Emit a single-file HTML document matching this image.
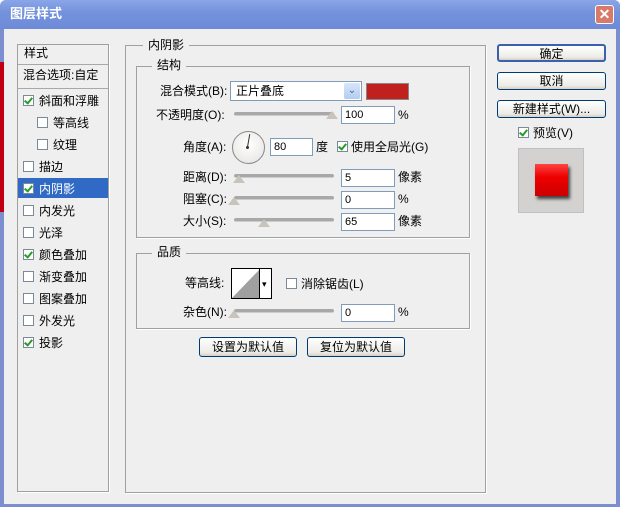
<!DOCTYPE html><html><head><meta charset="utf-8"><style>
*{margin:0;padding:0;box-sizing:border-box}
body{width:620px;height:511px;background:#fff;position:relative;overflow:hidden;font-family:"Liberation Sans","Noto Sans CJK SC","WenQuanYi Zen Hei",sans-serif;font-size:12px;color:#000}
.a{position:absolute}
.t{position:absolute;white-space:nowrap;line-height:14px}
.win{left:0;top:0;width:620px;height:507px;background:#7b8fd0;border-radius:6px 6px 0 0}
.body{left:4px;top:29px;width:612px;height:475px;background:#efefef}
.title{left:0;top:0;width:620px;height:29px;background:linear-gradient(#8aa6e8,#7593dd 40%,#6c8ad6);border-radius:6px 6px 0 0}
.box{position:absolute;border:1px solid #a0a0a0;box-shadow:1px 1px 0 #fff}
.leg{position:absolute;background:#efefef;padding:0 5px;line-height:14px}
.cb{position:absolute;width:11px;height:11px;border:1px solid #7a8a99;background:#fff}
.cb.on::after{content:"";position:absolute;left:2px;top:0px;width:3px;height:6px;border:solid #2a9a2a;border-width:0 2px 2px 0;transform:rotate(40deg)}
.inp{position:absolute;height:18px;background:#fff;border:1px solid #7f9db9;padding-left:3px;line-height:16px;font-size:11px}
.sl{position:absolute;height:4px;background:#a8a8a8;border-radius:2px;border-bottom:1px solid #ccc}
.th{position:absolute;width:0;height:0;border-left:6px solid transparent;border-right:6px solid transparent;border-bottom:8px solid #c8c4bc}
.btn{position:absolute;border:1px solid #003c74;border-radius:3px;background:linear-gradient(#fff,#ecebe6 80%,#d6d0c5);text-align:center;line-height:16px}
</style></head><body>
<div class="a win"></div>
<div class="a title"></div>
<div class="t" style="left:10px;top:7px;color:#fff;font-size:13px;font-weight:bold">图层样式</div>
<div class="a" style="left:595px;top:5px;width:19px;height:19px;background:#d87a6a;border:1px solid #fff;border-radius:3px;color:#fff;text-align:center;line-height:17px;font-weight:bold;font-size:14px">✕</div>
<div class="a body"></div>
<div class="a" style="left:0;top:62px;width:4px;height:150px;background:#c00010"></div>

<div class="box" style="left:17px;top:44px;width:92px;height:448px"></div>
<div class="t" style="left:24px;top:46px">样式</div>
<div class="a" style="left:18px;top:64px;width:90px;height:1px;background:#a8a8a8"></div>
<div class="t" style="left:23px;top:68px">混合选项:自定</div>
<div class="a" style="left:18px;top:88px;width:90px;height:1px;background:#a8a8a8"></div>
<div class="a" style="left:18px;top:178px;width:90px;height:20px;background:#316ac5"></div>
<div class="cb on" style="left:23px;top:95px"></div><div class="t" style="left:39px;top:94px">斜面和浮雕</div>
<div class="cb" style="left:37px;top:117px"></div><div class="t" style="left:53px;top:116px">等高线</div>
<div class="cb" style="left:37px;top:139px"></div><div class="t" style="left:53px;top:138px">纹理</div>
<div class="cb" style="left:23px;top:161px"></div><div class="t" style="left:39px;top:160px">描边</div>
<div class="cb on" style="left:23px;top:183px"></div><div class="t" style="left:39px;top:182px;color:#fff">内阴影</div>
<div class="cb" style="left:23px;top:205px"></div><div class="t" style="left:39px;top:204px">内发光</div>
<div class="cb" style="left:23px;top:227px"></div><div class="t" style="left:39px;top:226px">光泽</div>
<div class="cb on" style="left:23px;top:249px"></div><div class="t" style="left:39px;top:248px">颜色叠加</div>
<div class="cb" style="left:23px;top:271px"></div><div class="t" style="left:39px;top:270px">渐变叠加</div>
<div class="cb" style="left:23px;top:293px"></div><div class="t" style="left:39px;top:292px">图案叠加</div>
<div class="cb" style="left:23px;top:315px"></div><div class="t" style="left:39px;top:314px">外发光</div>
<div class="cb on" style="left:23px;top:337px"></div><div class="t" style="left:39px;top:336px">投影</div>

<div class="box" style="left:125px;top:45px;width:361px;height:448px"></div>
<div class="leg" style="left:143px;top:38px">内阴影</div>
<div class="box" style="left:136px;top:66px;width:334px;height:172px"></div>
<div class="leg" style="left:152px;top:58px">结构</div>

<div class="t" style="left:160px;top:84px">混合模式(B):</div>
<div class="a" style="left:230px;top:81px;width:132px;height:20px;background:#fff;border:1px solid #7f9db9"></div>
<div class="t" style="left:236px;top:84px">正片叠底</div>
<div class="a" style="left:344px;top:83px;width:16px;height:16px;background:linear-gradient(#d8e6fb,#b2ccf2);border-radius:2px;color:#4d6185;font-size:10px;text-align:center;line-height:16px">⌄</div>
<div class="a" style="left:366px;top:83px;width:43px;height:17px;background:#c0201e;border:1px solid #888"></div>

<div class="t" style="left:156px;top:108px">不透明度(O):</div>
<div class="sl" style="left:234px;top:112px;width:100px"></div><div class="th" style="left:326px;top:111px"></div>
<div class="inp" style="left:341px;top:106px;width:54px">100</div><div class="t" style="left:398px;top:108px">%</div>

<div class="t" style="left:183px;top:140px">角度(A):</div>
<div class="a" style="left:232px;top:131px;width:33px;height:33px;border-radius:50%;border:1px solid #888;background:radial-gradient(circle at 50% 40%,#fff,#e4e2df)"></div>
<div class="a" style="left:247px;top:134px;width:1px;height:13px;background:#333;transform:rotate(10deg);transform-origin:bottom"></div>
<div class="a" style="left:246px;top:146px;width:3px;height:3px;background:#333;border-radius:50%"></div>
<div class="inp" style="left:270px;top:138px;width:43px">80</div>
<div class="t" style="left:316px;top:140px">度</div>
<div class="cb on" style="left:337px;top:141px"></div><div class="t" style="left:351px;top:140px">使用全局光(G)</div>

<div class="t" style="left:183px;top:170px">距离(D):</div>
<div class="sl" style="left:234px;top:174px;width:100px"></div><div class="th" style="left:233px;top:175px"></div>
<div class="inp" style="left:341px;top:169px;width:54px">5</div><div class="t" style="left:398px;top:170px">像素</div>
<div class="t" style="left:183px;top:192px">阻塞(C):</div>
<div class="sl" style="left:234px;top:196px;width:100px"></div><div class="th" style="left:228px;top:197px"></div>
<div class="inp" style="left:341px;top:191px;width:54px">0</div><div class="t" style="left:398px;top:192px">%</div>
<div class="t" style="left:183px;top:214px">大小(S):</div>
<div class="sl" style="left:234px;top:218px;width:100px"></div><div class="th" style="left:258px;top:219px"></div>
<div class="inp" style="left:341px;top:213px;width:54px">65</div><div class="t" style="left:398px;top:214px">像素</div>

<div class="box" style="left:136px;top:253px;width:334px;height:76px"></div>
<div class="leg" style="left:152px;top:245px">品质</div>
<div class="t" style="left:185px;top:276px">等高线:</div>
<div class="a" style="left:231px;top:268px;width:41px;height:31px;background:#fff;border:1px solid #000"></div>
<svg class="a" style="left:232px;top:269px" width="28" height="29"><polygon points="0,29 28,0 28,29" fill="#a0a0a0"/></svg>
<div class="a" style="left:259px;top:269px;width:1px;height:29px;background:#000"></div>
<div class="t" style="left:262px;top:277px;font-size:9px">▾</div>
<div class="cb" style="left:286px;top:278px"></div><div class="t" style="left:301px;top:277px">消除锯齿(L)</div>
<div class="t" style="left:183px;top:305px">杂色(N):</div>
<div class="sl" style="left:234px;top:309px;width:100px"></div><div class="th" style="left:228px;top:310px"></div>
<div class="inp" style="left:341px;top:304px;width:54px">0</div><div class="t" style="left:398px;top:305px">%</div>

<div class="btn" style="left:199px;top:337px;width:98px;height:20px;line-height:18px">设置为默认值</div>
<div class="btn" style="left:307px;top:337px;width:98px;height:20px;line-height:18px">复位为默认值</div>

<div class="btn" style="left:497px;top:44px;width:109px;height:18px;border-width:2px;border-color:#3c5fae">确定</div>
<div class="btn" style="left:497px;top:72px;width:109px;height:18px">取消</div>
<div class="btn" style="left:497px;top:100px;width:109px;height:18px">新建样式(W)...</div>
<div class="cb on" style="left:518px;top:127px"></div><div class="t" style="left:533px;top:126px">预览(V)</div>
<div class="a" style="left:518px;top:148px;width:66px;height:65px;background:#d4d2d0;border:1px solid #c0c0c0"></div>
<div class="a" style="left:535px;top:164px;width:33px;height:32px;background:linear-gradient(#f44,#e00 40%,#c00);box-shadow:2px 3px 3px #444"></div>
</body></html>
